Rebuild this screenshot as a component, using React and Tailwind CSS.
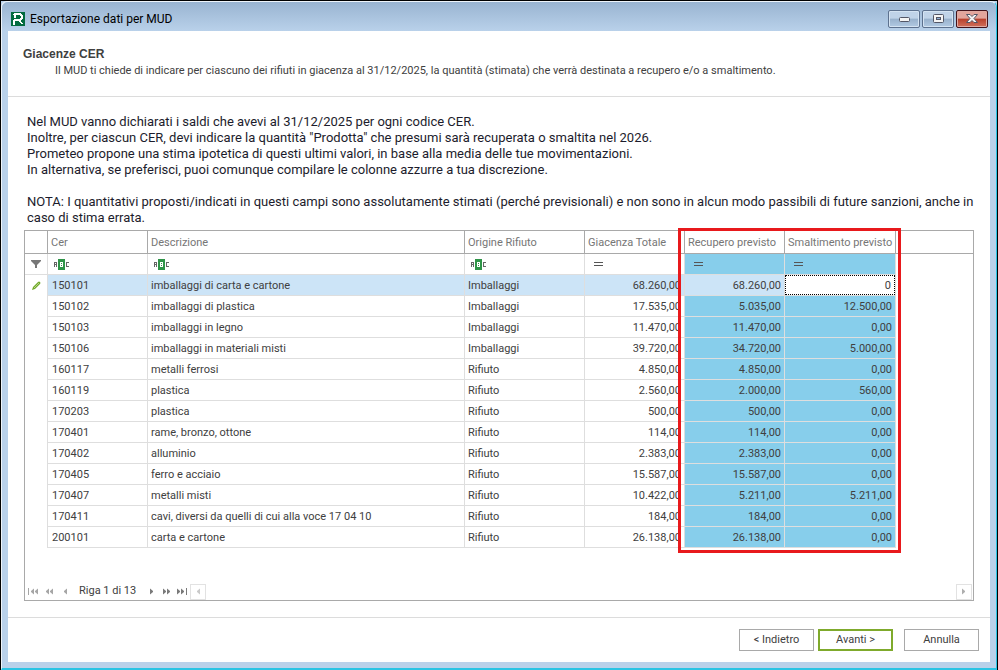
import React, { useState } from 'react'

const INTRO = [
  'Nel MUD vanno dichiarati i saldi che avevi al 31/12/2025 per ogni codice CER.',
  'Inoltre, per ciascun CER, devi indicare la quantità "Prodotta" che presumi sarà recuperata o smaltita nel 2026.',
  'Prometeo propone una stima ipotetica di questi ultimi valori, in base alla media delle tue movimentazioni.',
  'In alternativa, se preferisci, puoi comunque compilare le colonne azzurre a tua discrezione.',
]

const ROWS = [
  ['150101', 'imballaggi di carta e cartone', 'Imballaggi', '68.260,00', '68.260,00', '0'],
  ['150102', 'imballaggi di plastica', 'Imballaggi', '17.535,00', '5.035,00', '12.500,00'],
  ['150103', 'imballaggi in legno', 'Imballaggi', '11.470,00', '11.470,00', '0,00'],
  ['150106', 'imballaggi in materiali misti', 'Imballaggi', '39.720,00', '34.720,00', '5.000,00'],
  ['160117', 'metalli ferrosi', 'Rifiuto', '4.850,00', '4.850,00', '0,00'],
  ['160119', 'plastica', 'Rifiuto', '2.560,00', '2.000,00', '560,00'],
  ['170203', 'plastica', 'Rifiuto', '500,00', '500,00', '0,00'],
  ['170401', 'rame, bronzo, ottone', 'Rifiuto', '114,00', '114,00', '0,00'],
  ['170402', 'alluminio', 'Rifiuto', '2.383,00', '2.383,00', '0,00'],
  ['170405', 'ferro e acciaio', 'Rifiuto', '15.587,00', '15.587,00', '0,00'],
  ['170407', 'metalli misti', 'Rifiuto', '10.422,00', '5.211,00', '5.211,00'],
  ['170411', 'cavi, diversi da quelli di cui alla voce 17 04 10', 'Rifiuto', '184,00', '184,00', '0,00'],
  ['200101', 'carta e cartone', 'Rifiuto', '26.138,00', '26.138,00', '0,00'],
]

function AppLogo() {
  return (
    <svg width="14" height="14" viewBox="0 0 14 14" shapeRendering="crispEdges" aria-hidden="true">
      <rect width="14" height="14" fill="#036b3f" />
      <path
        d="M3 1h7v1h1v1h1v4h-1v1h-1v1h-6v4h-2v-5h1v-1h6v-1h1v-2h-1v-1h-4v3h-2v-3h-1v-1h1z"
        fill="#fff"
      />
      <path d="M8 9h2v1h1v1h1v1h-2v-1h-1v-1h-1z" fill="#fff" />
    </svg>
  )
}

function AbcIcon() {
  return (
    <svg width="16" height="11" viewBox="0 0 16 11" shapeRendering="crispEdges" aria-hidden="true">
      <path d="M0 3h3v5h-1v-2h-1v2h-1zM1 4v1h1v-1z" fill="#666" fillRule="evenodd" />
      <rect x="4" width="7" height="11" rx="1" fill="#2f9448" />
      <path d="M6 3h3v5h-3zM7 4v1h1v-1zM7 6v1h1v-1z" fill="#fff" fillRule="evenodd" />
      <path d="M12 3h3v1h-2v3h2v1h-3z" fill="#666" />
    </svg>
  )
}

function EqualsIcon() {
  return (
    <svg width="9" height="4" viewBox="0 0 9 4" shapeRendering="crispEdges" aria-hidden="true">
      <path d="M0 0h9v1h-9zM0 3h9v1h-9z" fill="#555" />
    </svg>
  )
}

function FunnelIcon() {
  return (
    <svg width="10" height="8" viewBox="0 0 10 8" aria-hidden="true">
      <path d="M0 0h10v1l-4 4v3h-2v-3l-4-4z" fill="#777" />
    </svg>
  )
}

function PencilIcon() {
  return (
    <svg width="9" height="9" viewBox="0 0 9 9" aria-hidden="true">
      <path d="M0 9l1-3 5-5q1-1 2 0t0 2l-5 5z" fill="#72a92c" />
      <path d="M2 7l5-5" stroke="#b4d584" />
    </svg>
  )
}

/* bars and arrow heads of the record navigator, pointing right */
function NavIcon({ count = 1, bar = false, back = false }) {
  const width = count * 4 + (bar ? 2 : 0)
  return (
    <svg
      width={width}
      height="7"
      viewBox={`0 0 ${width} 7`}
      className={back ? 'rotate-180 text-[#a6a6a6]' : 'text-[#7a7a7a]'}
      aria-hidden="true"
    >
      {Array.from({ length: count }, (_, i) => (
        <path key={i} d={`M${i * 4} 0.500l3 2.500v1l-3 2.500z`} fill="currentColor" />
      ))}
      {bar && <path d={`M${width - 1} 0h1v7h-1z`} fill="currentColor" />}
    </svg>
  )
}

function CaptionButton({ label, close, children }) {
  return (
    <button
      type="button"
      aria-label={label}
      className={`flex h-[18px] w-8 items-center justify-center rounded-[2px] border ring-1 ring-inset ${
        close
          ? 'border-[#43131b] bg-linear-to-b from-[#e3a59c] from-45% via-[#b8402c] via-50% to-[#d0705c] ring-[#e0aaa2]'
          : 'border-[#5d718e] bg-linear-to-b from-[#c0d3e8] from-45% via-[#98b1cc] via-50% to-[#b2cae3] ring-[#d4e3f2]'
      }`}
    >
      {children}
    </button>
  )
}

function PagerButton({ label, className, ...icon }) {
  return (
    <button type="button" aria-label={label} className={`flex h-4 items-center justify-center ${className}`}>
      <NavIcon {...icon} />
    </button>
  )
}

export default function App() {
  const [amount, setAmount] = useState(ROWS[0][5])

  return (
    <div className="flex min-h-screen flex-col border-x border-t border-black bg-[#b9d1ea] font-['Roboto',sans-serif] text-[11px] text-[#404040]">
      <div className="flex grow flex-col rounded-t-md border border-b-2 border-t-[#eef4fa] border-r-[#2ac4e4] border-b-[#2ac4e4] border-l-[#eef4fa] px-[6px] pb-[6px]">
        <header className="-mx-[6px] flex h-[29px] items-center gap-1 rounded-t-md bg-linear-to-b from-[#99b4d1] to-[#b9d1ea] pr-2 pl-[9px] pt-1">
          <AppLogo />
          <h1 className="grow pl-px text-xs text-black">Esportazione dati per MUD</h1>
          <div className="flex gap-[2px]">
            <CaptionButton label="Riduci a icona">
              <svg width="11" height="7" viewBox="0 0 11 7" aria-hidden="true">
                <rect x="0.500" y="2.500" width="10" height="4" rx="1" fill="#f4f4f4" stroke="#535666" />
              </svg>
            </CaptionButton>
            <CaptionButton label="Ingrandisci">
              <svg width="11" height="9" viewBox="0 0 11 9" aria-hidden="true">
                <rect x="0.500" y="0.500" width="10" height="8" rx="1" fill="#f4f4f4" stroke="#535666" />
                <rect x="3.500" y="3.500" width="4" height="2" fill="#8fb0d6" stroke="#535666" />
              </svg>
            </CaptionButton>
            <CaptionButton label="Chiudi" close>
              <svg width="12" height="9" viewBox="0 0 12 9" aria-hidden="true">
                <path d="M0.500 0.500h3.500l2 2l2-2h3.500l-3.500 4l3.500 4h-3.500l-2-2l-2 2h-3.500l3.500-4z" fill="#f4f4f4" stroke="#535666" />
              </svg>
            </CaptionButton>
          </div>
        </header>

        <main className="flex grow flex-col bg-white">
          <section className="h-[66px] border-b border-[#dcdcdc] px-[15px] pt-[15px]">
            <h2 className="font-['Liberation_Sans',sans-serif] text-xs leading-4 font-bold">Giacenze CER</h2>
            <p className="pt-px pl-8 leading-4">
              Il MUD ti chiede di indicare per ciascuno dei rifiuti in giacenza al 31/12/2025, la quantità (stimata) che
              verrà destinata a recupero e/o a smaltimento.
            </p>
          </section>

          <section className="pt-[17px] pr-3 pl-[19px] text-[13px] leading-4 text-[#1c1c2c]">
            {INTRO.map((line) => (
              <p key={line}>{line}</p>
            ))}
            <p className="pt-4">
              NOTA: I quantitativi proposti/indicati in questi campi sono assolutamente stimati (perché previsionali) e
              non sono in alcun modo passibili di future sanzioni, anche in caso di stima errata.
            </p>
          </section>

          <section className="mx-4 mt-1 flex grow flex-col justify-between border border-[#a9a9a9]">
            <div className="relative">
              <table className="w-full table-fixed border-separate border-spacing-0 leading-4">
                <colgroup>
                  <col className="w-[23px]" />
                  <col className="w-[100px]" />
                  <col className="w-[317px]" />
                  <col className="w-[120px]" />
                  <col className="w-[100px]" />
                  <col className="w-[100px]" />
                  <col className="w-[111px]" />
                  <col />
                </colgroup>
                <thead>
                  <tr className="h-[23px] text-left text-[#767676] *:border-b *:border-[#a9a9a9] *:pt-0.5 *:pr-0 *:pb-0 *:pl-[3px] *:font-normal *:whitespace-nowrap">
                    <td className="border-r" />
                    <th className="border-r">Cer</th>
                    <th className="border-r">Descrizione</th>
                    <th className="border-r">Origine Rifiuto</th>
                    <th className="border-r">Giacenza Totale</th>
                    <th className="border-r">Recupero previsto</th>
                    <th className="border-r">Smaltimento previsto</th>
                    <td />
                  </tr>
                  <tr className="h-[21px] *:border-[#dedede] *:p-0">
                    <td className="border-r border-b">
                      <span className="flex justify-center"><FunnelIcon /></span>
                    </td>
                    {['Cer', 'Descrizione', 'Origine Rifiuto'].map((name) => (
                      <td key={name} className="border-r border-b">
                        <button type="button" aria-label={`Filtro ${name}`} className="flex pl-[6px]"><AbcIcon /></button>
                      </td>
                    ))}
                    <td className="border-r border-b">
                      <button type="button" aria-label="Filtro Giacenza Totale" className="flex pl-[9px]"><EqualsIcon /></button>
                    </td>
                    {['Recupero previsto', 'Smaltimento previsto'].map((name) => (
                      <td key={name} className="border-r border-b bg-[#87ceeb]">
                        <button type="button" aria-label={`Filtro ${name}`} className="flex pl-[9px]"><EqualsIcon /></button>
                      </td>
                    ))}
                    <td />
                  </tr>
                </thead>
                <tbody>
                  {ROWS.map(([cer, descrizione, origine, totale, recupero, smaltimento], i) => (
                    <tr
                      key={cer}
                      className={`h-[21px] *:border-[#dedede] *:pt-0.5 *:pb-0 *:whitespace-nowrap ${i === 0 ? '*:bg-[#cce4f7]' : ''}`}
                    >
                      <td className="border-r bg-white! p-0!">
                        {i === 0 && <span className="flex justify-center"><PencilIcon /></span>}
                      </td>
                      <td className="border-r border-b px-1">{cer}</td>
                      <td className="border-r border-b px-[3px]">{descrizione}</td>
                      <td className="border-r border-b px-[3px]">{origine}</td>
                      <td className="border-r border-b px-[3px] text-right">{totale}</td>
                      <td className={`border-r border-b px-[3px] text-right ${i === 0 ? '' : 'bg-[#87ceeb]'}`}>{recupero}</td>
                      {i === 0 ? (
                        <td className="border-r border-b p-0!">
                          <input
                            type="text"
                            aria-label="Smaltimento previsto"
                            value={amount}
                            onChange={(e) => setAmount(e.target.value)}
                            className="block h-5 w-full border border-dotted border-black bg-white px-[3px] text-right"
                          />
                        </td>
                      ) : (
                        <td className="border-r border-b bg-[#87ceeb] px-[3px] text-right">{smaltimento}</td>
                      )}
                      <td className="bg-white!" />
                    </tr>
                  ))}
                </tbody>
              </table>
              {/* frame round the two columns to fill in */}
              <div className="pointer-events-none absolute -top-[3px] -bottom-[5px] left-[653px] w-[223px] border-3 border-[#e8191c]" />
            </div>

            <nav aria-label="Righe" className="flex h-[17px] items-center">
              <PagerButton label="Prima riga" className="w-4" count={2} bar back />
              <PagerButton label="Pagina precedente" className="w-4" count={2} back />
              <PagerButton label="Riga precedente" className="w-4" back />
              <span className="w-[71px] pl-[6px]">Riga 1 di 13</span>
              <PagerButton label="Riga successiva" className="w-4" />
              <PagerButton label="Pagina successiva" className="w-[14px]" count={2} />
              <PagerButton label="Ultima riga" className="w-4" count={2} bar />
              <PagerButton label="Scorri a sinistra" className="w-4 border border-[#d0d0d0] opacity-60" back />
              <PagerButton label="Scorri a destra" className="mr-px ml-auto w-4 border border-[#d0d0d0] opacity-60" />
            </nav>
          </section>

          <footer className="mt-4 flex h-[45px] items-center justify-end border-t border-[#dcdcdc] pr-[11px]">
            <button type="button" className="h-[22px] w-[75px] border border-[#a9a9a9] pt-px">&lt; Indietro</button>
            <button type="button" className="ml-1 h-[22px] w-[75px] border-2 border-[#7faa2c] pt-px">Avanti &gt;</button>
            <button type="button" className="ml-[11px] h-[22px] w-[75px] border border-[#a9a9a9] pt-px">Annulla</button>
          </footer>
        </main>
      </div>
    </div>
  )
}
